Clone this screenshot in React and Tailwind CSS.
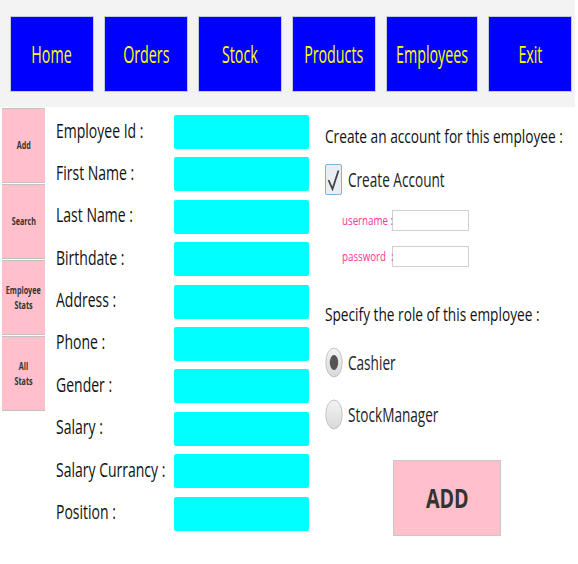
import React from "react";

const font = { fontFamily: '"Open Sans", "Noto Sans", sans-serif' };

const navItems = [
  { t: "Home", w: "w-[84px]" },
  { t: "Orders", w: "w-[84px]" },
  { t: "Stock", w: "w-[84px]" },
  { t: "Products", w: "w-[84px]" },
  { t: "Employees", w: "w-[92px]" },
  { t: "Exit", w: "w-[84px]" },
];

const fields = [
  "Employee Id :",
  "First Name :",
  "Last Name :",
  "Birthdate :",
  "Address :",
  "Phone :",
  "Gender :",
  "Salary :",
  "Salary Currancy :",
  "Position :",
];

function Radio({ checked }) {
  return (
    <svg width="18" height="31" viewBox="0 0 18 31" className="shrink-0">
      <defs>
        <linearGradient id={checked ? "g1" : "g2"} x1="0" y1="0" x2="0" y2="1">
          <stop offset="0" stopColor="#f4f4f4" />
          <stop offset="1" stopColor="#d8d8d8" />
        </linearGradient>
      </defs>
      <ellipse cx="9" cy="15.5" rx="8.2" ry="14.5" fill={`url(#${checked ? "g1" : "g2"})`} stroke="#c4c4c4" strokeWidth="1" />
      {checked && <ellipse cx="9" cy="15.5" rx="4.2" ry="7.5" fill="#555" />}
    </svg>
  );
}

export default function App() {
  return (
    <div className="w-[578px] h-[564px] bg-white overflow-hidden" style={font}>
      <div className="w-[575px] h-[107px] bg-[#f3f3f3] flex gap-[10px] pl-[10px] pt-[16px]">
        {navItems.map((n) => (
          <div
            key={n.t}
            className={`${n.w} shrink-0 h-[76px] bg-[#0000ff] border border-[#c8c8d8] flex items-center justify-center text-[#ffff00] text-[23px] whitespace-nowrap`}
          >
            <span className="inline-block scale-x-[0.62]">{n.t}</span>
          </div>
        ))}
      </div>
      <div className="flex">
        <div className="w-[43px] shrink-0 ml-[2px] mt-[1px] flex flex-col gap-[1px]">
          {[["Add"], ["Search"], ["Employee", "Stats"], ["All", "Stats"]].map((lines, i) => (
            <div
              key={i}
              className="h-[75px] bg-[#ffc0cb] border-t border-b border-[#c0c0c0] flex flex-col items-center justify-center text-[10px] font-bold text-[#333] leading-[15px]"
            >
              {lines.map((l) => (
                <span key={l} className="inline-block scale-x-[0.72] whitespace-nowrap">{l}</span>
              ))}
            </div>
          ))}
        </div>
        <div className="w-[253px] shrink-0 ml-[11px] mt-[8px] flex flex-col gap-[8.4px]">
          {fields.map((f) => (
            <div key={f} className="flex items-center h-[34px]">
              <div className="w-[118px] shrink-0 text-[20px] text-[#111] pb-[3px]">
                <span className="inline-block origin-left scale-x-[0.7] whitespace-nowrap">{f}</span>
              </div>
              <div className="w-[135px] shrink-0 h-[34px] bg-[#00ffff] rounded-[2px]" />
            </div>
          ))}
        </div>
        <div className="w-[250px] shrink-0 ml-[16px] flex flex-col">
          <div className="mt-[16px] text-[19px] text-[#111] leading-[26px]">
            <span className="inline-block origin-left scale-x-[0.72] whitespace-nowrap">Create an account for this employee :</span>
          </div>
          <div className="mt-[15px] flex items-center gap-[6px]">
            <div className="w-[17px] h-[31px] shrink-0 border border-[#7fb4d8] bg-[#e8eef3] rounded-[2px] flex items-center justify-center">
              <svg width="13" height="22" viewBox="0 0 13 22">
                <path d="M1.5 11 L5.5 20 L11.5 1.5" fill="none" stroke="#444" strokeWidth="1.8" />
              </svg>
            </div>
            <span className="text-[20px] text-[#222] leading-[28px]">
              <span className="inline-block origin-left scale-x-[0.68] whitespace-nowrap">Create Account</span>
            </span>
          </div>
          <div className="mt-[15px] ml-[17px] flex items-center">
            <span className="w-[50px] shrink-0 text-[13px] text-[#ff3399]">
              <span className="inline-block origin-left scale-x-[0.75] whitespace-nowrap">username :</span>
            </span>
            <div className="w-[77px] h-[21px] border border-[#d0d0d0] bg-white" />
          </div>
          <div className="mt-[15px] ml-[17px] flex items-center">
            <span className="w-[50px] shrink-0 text-[13px] text-[#ff3399]">
              <span className="inline-block origin-left scale-x-[0.75] whitespace-nowrap">password &nbsp;:</span>
            </span>
            <div className="w-[77px] h-[21px] border border-[#d0d0d0] bg-white" />
          </div>
          <div className="mt-[34px] text-[19px] text-[#111] leading-[26px]">
            <span className="inline-block origin-left scale-x-[0.72] whitespace-nowrap">Specify the role of this employee :</span>
          </div>
          <div className="mt-[20px] flex items-center gap-[5px]">
            <Radio checked />
            <span className="text-[20px] text-[#222]">
              <span className="inline-block origin-left scale-x-[0.68] whitespace-nowrap">Cashier</span>
            </span>
          </div>
          <div className="mt-[21px] flex items-center gap-[5px]">
            <Radio />
            <span className="text-[20px] text-[#222]">
              <span className="inline-block origin-left scale-x-[0.68] whitespace-nowrap">StockManager</span>
            </span>
          </div>
          <div className="mt-[30px] ml-[68px] w-[108px] h-[76px] bg-[#ffc0cb] border border-[#c8c8c8] flex items-center justify-center text-[27px] font-bold text-[#333]">
            <span className="inline-block scale-x-[0.73]">ADD</span>
          </div>
        </div>
      </div>
    </div>
  );
}
